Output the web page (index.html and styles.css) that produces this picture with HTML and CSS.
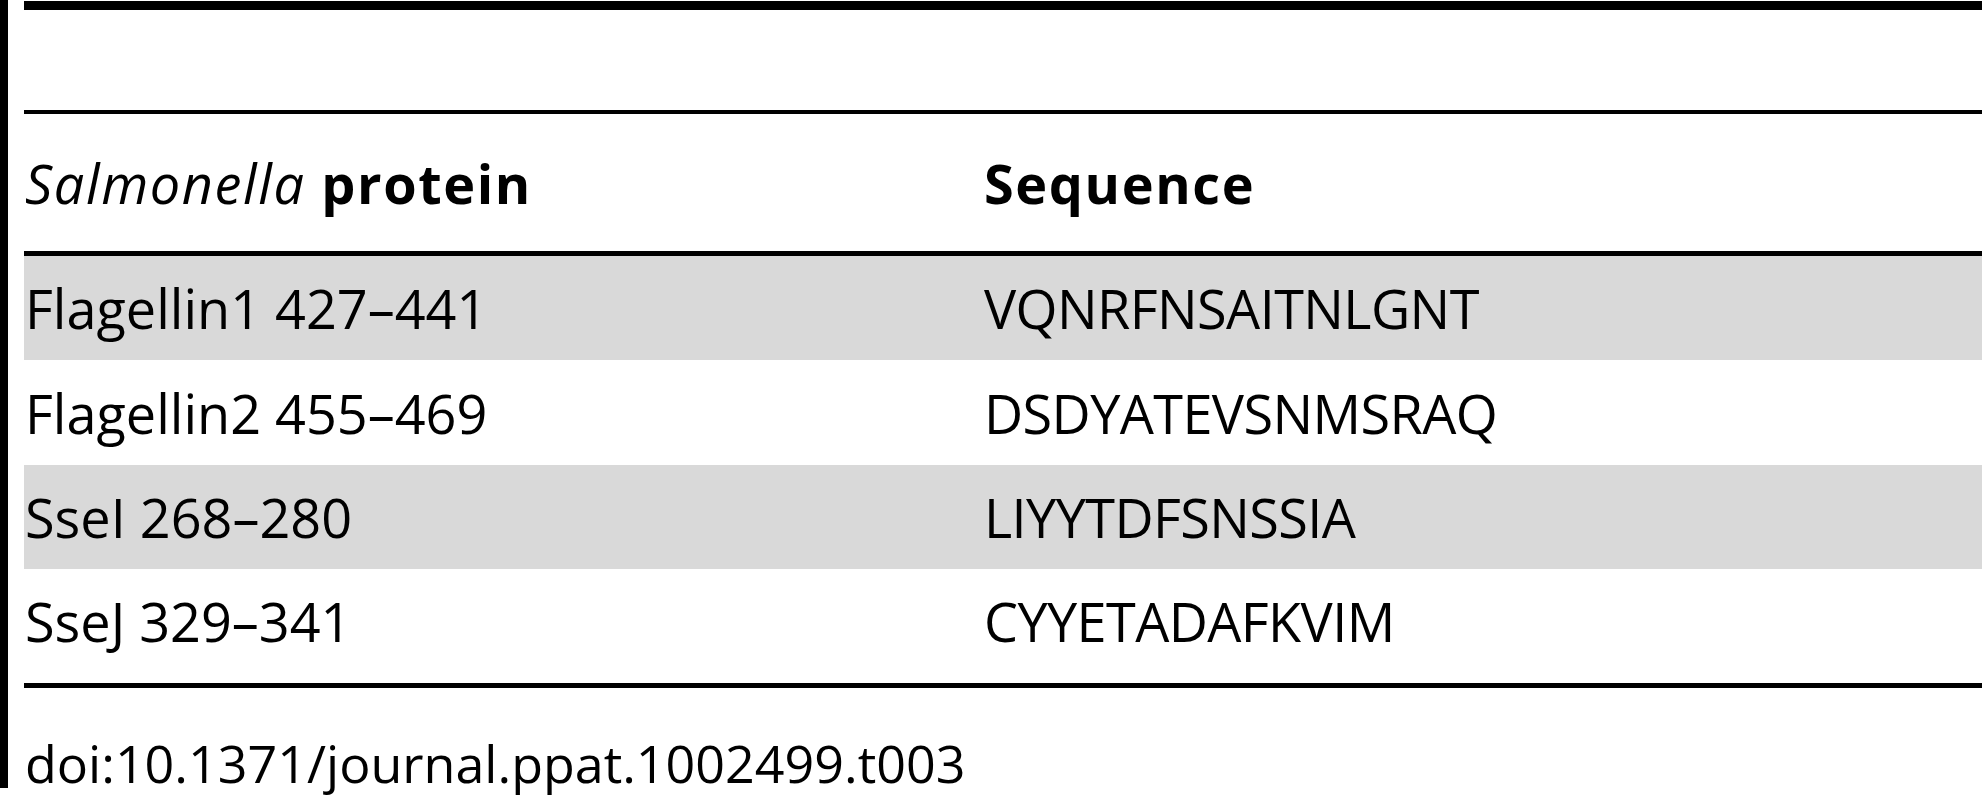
FILE: index.html
```html
<!DOCTYPE html>
<html>
<head>
<meta charset="utf-8">
<link rel="stylesheet" href="styles.css">
</head>
<body>
<div class="page">
  <div class="rule-top"></div>
  <div class="caption"></div>
  <div class="table">
    <div class="row head">
      <div class="cell"><i class="it">Salmonella</i> protein</div>
      <div class="cell">Sequence</div>
    </div>
    <div class="row shade r1">
      <div class="cell">Flagellin1 427–441</div>
      <div class="cell seq">VQNRFNSAITNLGNT</div>
    </div>
    <div class="row r2">
      <div class="cell">Flagellin2 455–469</div>
      <div class="cell seq">DSDYATEVSNMSRAQ</div>
    </div>
    <div class="row shade r3">
      <div class="cell">SseI 268–280</div>
      <div class="cell seq">LIYYTDFSNSSIA</div>
    </div>
    <div class="row r4">
      <div class="cell">SseJ 329–341</div>
      <div class="cell seq">CYYETADAFKVIM</div>
    </div>
  </div>
  <div class="doi">doi:10.1371/journal.ppat.1002499.t003</div>
</div>
</body>
</html>
```
FILE: styles.css
```css
html, body {
  margin: 0;
  padding: 0;
  background: #fff;
}
body {
  font-family: "Open Sans", "Liberation Sans", sans-serif;
  color: #000;
  font-size: 54px;
  min-height: 800px;
}
.page {
  box-sizing: border-box;
  height: 788px;
  border-left: 8px solid #000;
  padding-left: 16px;
  padding-top: 1px;
}
.rule-top {
  height: 9px;
  background: #000;
}
.caption {
  height: 100px;
}
.table {
  border-top: 4px solid #000;
  border-bottom: 5px solid #000;
}
.row {
  display: grid;
  grid-template-columns: 959px 1fr;
  align-items: center;
  box-sizing: border-box;
  line-height: 60px;
}
.cell {
  padding-left: 1px;
  white-space: nowrap;
}
.seq {
  letter-spacing: -0.6px;
}
.head {
  height: 142px;
  border-bottom: 5px solid #000;
  font-weight: 700;
  letter-spacing: 1.6px;
}
.head .it {
  font-weight: 400;
  font-style: italic;
}
.shade {
  background: #d9d9d9;
}
.r1 { height: 104px; }
.r2 { height: 105px; }
.r3 { height: 104px; }
.r4 { height: 114px; padding-bottom: 10px; }
.doi {
  font-size: 52px;
  line-height: 50px;
  padding-top: 50px;
  padding-left: 1px;
}
```
